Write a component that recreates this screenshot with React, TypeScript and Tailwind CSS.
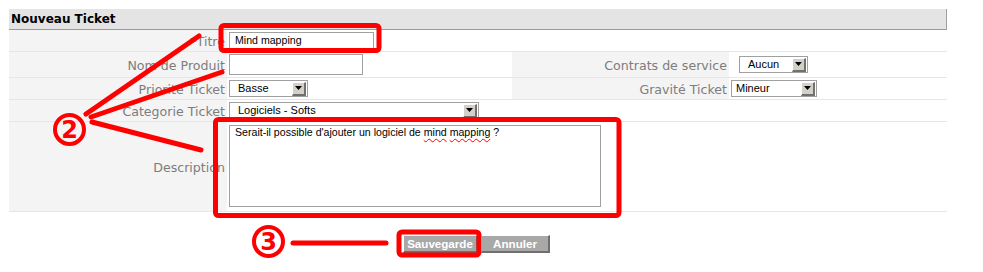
import React from "react";

const labelFont = { fontFamily: '"DejaVu Sans", Verdana, sans-serif' };
const arial = { fontFamily: '"Liberation Sans", Arial, sans-serif' };

function Select({ w, text, pad = 8 }: { w: number; text: string; pad?: number }) {
  return (
    <div
      className="flex h-[17px] items-center border border-[#a0a0a0] bg-white"
      style={{ width: w }}
    >
      <span className="flex-1 text-[11px] leading-none text-black" style={{ ...arial, paddingLeft: pad }}>
        {text}
      </span>
      <span className="mr-[1px] flex h-[14px] w-[14px] items-center justify-center border-t border-l border-t-white border-l-white border-b-2 border-r-2 border-b-[#707070] border-r-[#707070] bg-[#d4d0c8]">
        <svg width="7" height="4" viewBox="0 0 7 4">
          <path d="M0 0H7L3.5 4Z" fill="#000" />
        </svg>
      </span>
    </div>
  );
}

function Label({ children, w = 218 }: { children: React.ReactNode; w?: number }) {
  return (
    <div
      className="flex h-full items-center justify-end bg-[#f4f4f4] pr-[2px] pt-[3px] text-[12.6px] text-[#7d7d7d]"
      style={{ ...labelFont, width: w }}
    >
      {children}
    </div>
  );
}

export default function App() {
  return (
    <div className="relative h-[272px] w-[983px] bg-white">
      <div className="pl-[9px] pt-[9px]">
        <div className="w-[938px]">
          <div
            className="flex h-[21px] items-center border-b border-r border-b-[#9a9a9a] border-r-[#a0a0a0] bg-[#e4e4e4] pl-[2px] text-[12px] font-bold text-black"
            style={labelFont}
          >
            Nouveau Ticket
          </div>
          {/* Row 1 */}
          <div className="flex h-[22px] border-b border-[#e6e6e6]">
            <Label>
              <span className="text-[#ff0000]">*</span>Titre
            </Label>
            <div className="flex flex-1 items-center pl-[2px]">
              <div className="flex h-[17px] w-[145px] items-center border border-[#a0a0a0] bg-white pl-[5px] text-[10.6px] text-black" style={arial}>
                Mind mapping
              </div>
            </div>
          </div>
          {/* Row 2 */}
          <div className="flex h-[26px] border-b border-[#e6e6e6]">
            <Label>Nom de Produit</Label>
            <div className="flex w-[285px] items-center pl-[2px]">
              <div className="h-[21px] w-[134px] border border-[#a0a0a0] bg-white" />
            </div>
            <Label w={217}>Contrats de service</Label>
            <div className="flex flex-1 items-center pl-[10px]">
              <Select w={69} text="Aucun" />
            </div>
          </div>
          {/* Row 3 */}
          <div className="flex h-[22px] border-b border-[#e6e6e6]">
            <Label>Priorite Ticket</Label>
            <div className="flex w-[285px] items-center pl-[2px]">
              <Select w={79} text="Basse" />
            </div>
            <Label w={217}>Gravité Ticket</Label>
            <div className="flex flex-1 items-center pl-[2px]">
              <Select w={86} text="Mineur" pad={4} />
            </div>
          </div>
          {/* Row 4 */}
          <div className="flex h-[22px] border-b border-[#e6e6e6]">
            <Label>Categorie Ticket</Label>
            <div className="flex flex-1 items-center pl-[2px]">
              <Select w={250} text="Logiciels - Softs" />
            </div>
          </div>
          {/* Row 5 */}
          <div className="flex h-[90px] border-b border-[#e6e6e6]">
            <Label>Description</Label>
            <div className="flex flex-1 items-start pl-[2px] pt-[3px]">
              <div className="h-[82px] w-[372px] border border-[#a0a0a0] bg-white pl-[5px] text-[10.6px] leading-[13px] text-black" style={arial}>
                Serait-il possible d'ajouter un logiciel de{" "}
                <span className="underline decoration-wavy decoration-[#ff0000] decoration-[1px] underline-offset-2">mind</span>{" "}
                <span className="underline decoration-wavy decoration-[#ff0000] decoration-[1px] underline-offset-2">mapping</span> ?
              </div>
            </div>
          </div>
          {/* Buttons */}
          <div className="ml-[394px] mt-[23px] flex gap-[3px]" style={arial}>
            <button className="flex h-[18px] w-[75px] items-center justify-center border-t border-l border-t-white border-l-white border-b-2 border-r-2 border-b-[#6f6f6f] border-r-[#6f6f6f] bg-[#a8a8a8] text-[11.6px] font-bold text-white">
              Sauvegarde
            </button>
            <button className="flex h-[18px] w-[69px] items-center justify-center border-t border-l border-t-white border-l-white border-b-2 border-r-2 border-b-[#6f6f6f] border-r-[#6f6f6f] bg-[#a8a8a8] text-[11.6px] font-bold text-white">
              Annuler
            </button>
          </div>
        </div>
      </div>

      {/* Annotations overlay */}
      <svg className="pointer-events-none absolute left-0 top-0" width="983" height="272" viewBox="0 0 983 272">
        <g fill="none" stroke="#ff0000" strokeLinecap="round" strokeLinejoin="round">
          <rect x="221" y="25.5" width="158" height="25" rx="3" strokeWidth="5" />
          <rect x="215.5" y="119.5" width="403.5" height="96" rx="3" strokeWidth="5" />
          <rect x="399" y="232" width="80" height="23" rx="3" strokeWidth="5" />
          <circle cx="69.5" cy="129.5" r="14.5" strokeWidth="4" />
          <circle cx="268.5" cy="241.5" r="14.5" strokeWidth="4" />
          <line x1="86" y1="114" x2="199" y2="36" strokeWidth="5" />
          <line x1="91" y1="117" x2="222" y2="72" strokeWidth="5" />
          <line x1="92" y1="122" x2="201" y2="150" strokeWidth="5" />
          <line x1="293" y1="243" x2="386" y2="243" strokeWidth="5" />
        </g>
        <text x="69.5" y="138" textAnchor="middle" fontSize="24" fontWeight="bold" fill="#ff0000" fontFamily='"DejaVu Sans", sans-serif'>2</text>
        <text x="268.5" y="250" textAnchor="middle" fontSize="24" fontWeight="bold" fill="#ff0000" fontFamily='"DejaVu Sans", sans-serif'>3</text>
      </svg>
    </div>
  );
}
